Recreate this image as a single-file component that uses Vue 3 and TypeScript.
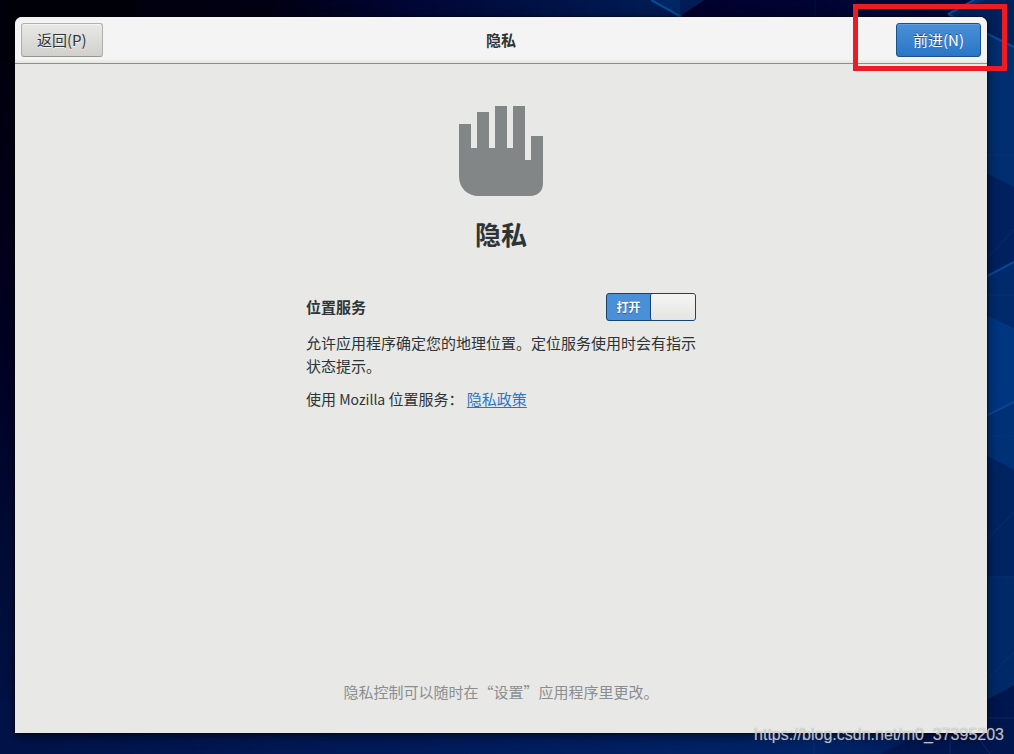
<script setup lang="ts">
import { ref } from 'vue'

const locationEnabled = ref(true)
</script>

<template>
  <div class="desktop">
    <svg class="wallpaper" viewBox="0 0 1014 754" preserveAspectRatio="none" aria-hidden="true">
      <defs>
        <linearGradient id="left-edge" x1="0" y1="0" x2="0" y2="1">
          <stop offset="0" stop-color="#00000c" />
          <stop offset="0.3" stop-color="#00001a" />
          <stop offset="0.5" stop-color="#000226" />
          <stop offset="0.75" stop-color="#000d38" />
          <stop offset="1" stop-color="#001348" />
        </linearGradient>
        <linearGradient id="top-edge" x1="0" y1="0" x2="1" y2="0">
          <stop offset="0" stop-color="#00000c" />
          <stop offset="0.27" stop-color="#000014" />
          <stop offset="0.4" stop-color="#000634" />
          <stop offset="0.63" stop-color="#001a52" />
          <stop offset="0.67" stop-color="#001a52" />
          <stop offset="0.671" stop-color="#00002c" />
          <stop offset="1" stop-color="#000a3c" />
        </linearGradient>
        <linearGradient id="bottom-edge" x1="0" y1="0" x2="1" y2="0">
          <stop offset="0" stop-color="#001348" />
          <stop offset="0.4" stop-color="#001a5a" />
          <stop offset="0.8" stop-color="#002468" />
          <stop offset="1" stop-color="#001850" />
        </linearGradient>
      </defs>
      <rect width="1014" height="754" fill="url(#left-edge)" />
      <rect width="1014" height="60" fill="url(#top-edge)" />
      <rect y="700" width="1014" height="54" fill="url(#bottom-edge)" />
      <path d="M0 0H136V17H0Z" fill="#00000a" />
      <path d="M651 0H704L680 16Z" fill="#002763" />
      <path d="M680 0H704L680 16Z" fill="#001c54" />
      <path d="M651 0L680 16L672 20" fill="none" stroke="#064a98" stroke-width="2" />
      <path d="M815 0V17" fill="none" stroke="#001044" />
      <path d="M948 14L974 0H1014V754H970V17Z" fill="#002e70" />
      <path d="M986 0H1014V46L950 14Z" fill="#00215c" />
      <path d="M948 14L974 0M948 14L1014 47" fill="none" stroke="#0a4a98" stroke-width="2" />
      <path d="M980 170L1014 187V262L980 278Z" fill="#00205f" />
      <path d="M980 278L1014 261V328L980 312Z" fill="#002a6c" />
      <path d="M980 312L1014 328V405L980 424Z" fill="#003580" />
      <path d="M980 418L1014 402V470L980 454Z" fill="#003076" />
      <path d="M980 452L1014 470V577H980Z" fill="#002362" />
      <path d="M980 577H1014V685L980 702Z" fill="#002968" />
      <path d="M1014 685V754H880L988 699Z" fill="#00164f" />
      <path d="M980 280L1014 262M980 419L1014 402" stroke="#0a4592" stroke-width="2" />
      <path d="M980 265L1014 230M980 405L1014 370M980 547L1014 512M980 687L1014 652M980 155H1014M980 295H1014M980 436H1014M980 577H1014M987 718H1014M814 733V754M950 733V754M975 733L990 754" fill="none" stroke="#073a7c" stroke-width="1" opacity="0.6" />
    </svg>

    <main class="window">
      <header class="titlebar">
        <button class="button" type="button">返回(P)</button>
        <h1 class="titlebar-title">隐私</h1>
        <button class="button suggested" type="button">前进(N)</button>
      </header>

      <section class="page">
        <svg class="hand" viewBox="0 0 96 96" aria-hidden="true">
          <path d="M6 24H18V48H24V12H36V48H42V6H54V48H60V6H72V60H78V36H90V83C90 91 85 96 77 96H26C14 96 6 88 6 76Z" />
        </svg>
        <h2 class="page-title">隐私</h2>

        <div class="settings">
          <div class="setting-row">
            <label class="setting-label" for="location">位置服务</label>
            <span class="switch">
              <input id="location" v-model="locationEnabled" class="switch-input" type="checkbox" role="switch" />
              <span class="switch-text" aria-hidden="true">{{ locationEnabled ? '打开' : '关闭' }}</span>
              <span class="switch-knob"></span>
            </span>
          </div>
          <p class="text">允许应用程序确定您的地理位置。定位服务使用时会有指示状态提示。</p>
          <p class="text">使用<span class="latin"> Mozilla </span>位置服务： <a class="link" href="#privacy-policy">隐私政策</a></p>
        </div>

        <p class="footnote">隐私控制可以随时在“设置”应用程序里更改。</p>
      </section>
    </main>

    <div class="highlight" aria-hidden="true"></div>
    <span class="watermark">https://blog.csdn.net/m0_37395203</span>
  </div>
</template>

<style>
body {
  margin: 0;
}
</style>

<style scoped>
.desktop {
  position: relative;
  display: flex;
  box-sizing: border-box;
  min-height: 100vh;
  padding: 17px 27px 21px 15px;
  overflow: hidden;
  background: #00001a;
  color: #2e3436;
  font-family: "Noto Sans CJK SC", sans-serif;
  font-size: 15px;
  line-height: 23px;
}

.wallpaper {
  position: absolute;
  inset: 0;
  width: 100%;
  height: 100%;
}

.window {
  position: relative;
  display: flex;
  flex: 1;
  flex-direction: column;
  border-radius: 7px 7px 0 0;
  background: #e8e8e6;
  box-shadow: 0 0 1px 1px rgba(0, 0, 0, 0.4), 0 3px 12px rgba(0, 0, 0, 0.6);
}

.titlebar {
  display: grid;
  grid-template-columns: 1fr auto 1fr;
  align-items: center;
  padding: 6px;
  border-bottom: 1px solid #8f8f87;
  border-radius: 7px 7px 0 0;
  background: linear-gradient(#f4f4f4 42px, #e4e4e1);
}

.titlebar-title {
  margin: 0;
  padding-bottom: 2px;
  font-size: 15px;
  font-weight: 700;
}

.button {
  justify-self: start;
  height: 34px;
  padding: 0 15px 2px;
  border: 1px solid #b0b0ac;
  border-bottom-color: #979790;
  border-radius: 3px;
  background: linear-gradient(#e8e8e6, #d0d0cd);
  box-shadow: inset 0 1px rgba(255, 255, 255, 0.5);
  color: #2e3436;
  font: inherit;
  text-shadow: 0 1px rgba(255, 255, 255, 0.7);
}

.suggested {
  justify-self: end;
  min-width: 85px;
  border-color: #1c5187;
  background: linear-gradient(#4a90d9, #2a76c6);
  box-shadow: inset 0 1px rgba(255, 255, 255, 0.15);
  color: #fff;
  text-shadow: 0 -1px rgba(0, 0, 0, 0.45);
}

.page {
  display: flex;
  flex: 1;
  flex-direction: column;
  align-items: center;
  padding: 36px 24px 30px;
}

.hand {
  width: 96px;
  height: 96px;
  fill: #838686;
}

.page-title {
  margin: 18px 0 39px;
  font-size: 26px;
  font-weight: 700;
  line-height: 40px;
}

.settings {
  display: flex;
  flex-direction: column;
  gap: 10px;
  width: 100%;
  max-width: 390px;
}

.setting-row {
  display: flex;
  align-items: center;
  justify-content: space-between;
}

.setting-label {
  padding-bottom: 2px;
  font-weight: 700;
}

.switch {
  position: relative;
  display: grid;
  grid-template-columns: 43px 1fr;
  box-sizing: border-box;
  width: 90px;
  height: 28px;
  border: 1px solid #184472;
  border-radius: 3px;
  background: #4a90d9;
}

.switch:has(.switch-input:not(:checked)) {
  grid-template-columns: 1fr 43px;
  border-color: #979790;
  background: #c8c8c5;
}

.switch-input {
  position: absolute;
  inset: 0;
  width: 100%;
  height: 100%;
  margin: 0;
  opacity: 0;
}

.switch-text {
  color: #fff;
  font-size: 12px;
  font-weight: 700;
  line-height: 26px;
  text-align: center;
  text-shadow: 0 1px 1px rgba(0, 0, 0, 0.4);
  pointer-events: none;
}

.switch-knob {
  border-left: 1px solid #184472;
  border-radius: 2px;
  background: linear-gradient(#f5f5f4, #e4e4e2);
  pointer-events: none;
}

.switch-input:not(:checked) ~ .switch-text {
  order: 2;
}

.text {
  margin: 0;
}

.latin {
  font-size: 14px;
}

.link {
  color: #2a76c6;
  text-underline-offset: 2px;
}

.footnote {
  margin: auto 0 0;
  color: #8b8e8f;
}

.highlight {
  position: absolute;
  top: 4px;
  right: 7px;
  box-sizing: border-box;
  width: 154px;
  height: 67px;
  border: 5px solid #ed1c24;
  pointer-events: none;
}

.watermark {
  position: absolute;
  right: 10px;
  bottom: 8px;
  color: rgba(240, 240, 240, 0.72);
  font-family: "Liberation Sans", sans-serif;
  font-size: 16px;
  text-shadow: 0 0 1px rgba(110, 110, 110, 0.7);
}
</style>
